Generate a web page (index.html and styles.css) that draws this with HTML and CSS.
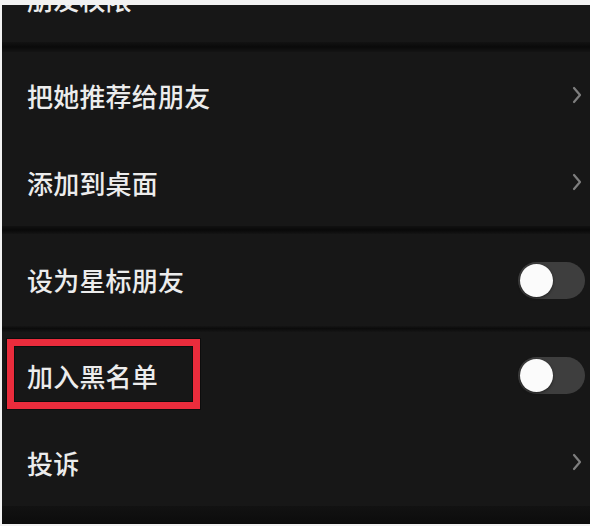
FILE: index.html
```html
<!DOCTYPE html>
<html lang="zh-CN">
<head>
    <meta charset="UTF-8">
    <meta name="viewport" content="width=device-width, initial-scale=1.0">
    <title>资料设置</title>
    <link rel="stylesheet" href="styles.css">
</head>
<body>
    <div class="settings">
        <div class="row row-cut">
            <span class="label">朋友权限</span>
        </div>

        <div class="gap gap-thick"></div>

        <div class="row row-link">
            <span class="label">把她推荐给朋友</span>
            <svg class="chevron" viewBox="0 0 10 18"><polyline points="2,2 8,9 2,16"/></svg>
        </div>
        <div class="row row-link">
            <span class="label">添加到桌面</span>
            <svg class="chevron" viewBox="0 0 10 18"><polyline points="2,2 8,9 2,16"/></svg>
        </div>

        <div class="gap gap-mid"></div>

        <div class="row row-switch">
            <span class="label">设为星标朋友</span>
            <div class="switch"><div class="knob"></div></div>
        </div>

        <div class="gap gap-thin"></div>

        <div class="row row-switch row-marked">
            <span class="label">加入黑名单</span>
            <div class="switch"><div class="knob"></div></div>
            <div class="highlight"></div>
        </div>
        <div class="row row-link">
            <span class="label">投诉</span>
            <svg class="chevron" viewBox="0 0 10 18"><polyline points="2,2 8,9 2,16"/></svg>
        </div>

        <div class="gap gap-bottom"></div>
    </div>
</body>
</html>
```

FILE: styles.css
```css
* {
    margin: 0;
    padding: 0;
    box-sizing: border-box;
    font-family: 'Noto Sans CJK SC', 'Noto Sans', sans-serif;
}

body {
    background: #f2f2f2;
    width: 590px;
    height: 526px;
    overflow: hidden;
}

.settings {
    margin: 5px 0 0 2px;
    background: #171717;
    display: flex;
    flex-direction: column;
}

.row {
    position: relative;
    display: flex;
    align-items: center;
    justify-content: space-between;
    padding: 0 8px 0 25px;
    height: 87px;
    background: #171717;
}

.label {
    color: #ececec;
    font-size: 26px;
    line-height: 26px;
    font-weight: 500;
    letter-spacing: 0.2px;
}

.row-cut {
    height: 37px;
    align-items: flex-start;
    overflow: hidden;
}

.row-cut .label {
    margin-top: -19px;
}

.row-link:nth-of-type(3) {
    height: 87px;
}

.row-switch {
    height: 92px;
    padding-right: 5px;
}

.row-marked {
    height: 87px;
}

.chevron {
    width: 10px;
    height: 18px;
    margin-top: -2px;
}

.chevron polyline {
    fill: none;
    stroke: #7e7e7e;
    stroke-width: 2.2;
    stroke-linecap: round;
    stroke-linejoin: round;
}

.switch {
    width: 67px;
    height: 37px;
    border-radius: 19px;
    background: #3e3e3e;
    padding: 2px;
    display: flex;
    align-items: center;
}

.knob {
    width: 33px;
    height: 33px;
    border-radius: 50%;
    background: #fbfbfb;
    box-shadow: 0 1px 3px rgba(0, 0, 0, 0.5);
}

.highlight {
    position: absolute;
    left: 5px;
    top: 7px;
    width: 193px;
    height: 70px;
    border: 7px solid #ea2c3c;
    box-shadow: 0 0 0 1px rgba(0, 0, 0, 0.4), inset 0 0 0 1px rgba(0, 0, 0, 0.4);
}

.gap {
    background: #0e0e0e;
}

.gap-thick {
    height: 10px;
    background: linear-gradient(#121212, #0a0a0a 50%, #141414);
}

.gap-mid {
    height: 8px;
    background: linear-gradient(#111111, #090909 50%, #141414);
}

.gap-thin {
    height: 6px;
    background: linear-gradient(#151515, #0b0b0b 40%, #151515);
}

.gap-bottom {
    height: 18px;
    background: linear-gradient(#121212, #0c0c0c);
}
```
